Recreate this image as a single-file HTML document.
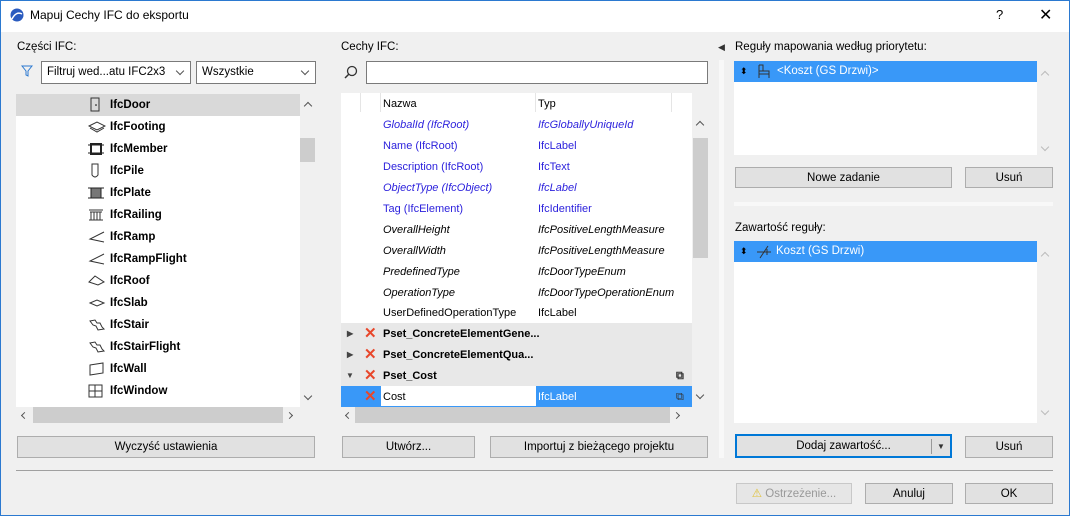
<!DOCTYPE html>
<html><head><meta charset="utf-8"><style>
*{box-sizing:border-box;margin:0;padding:0}
body{width:1070px;height:516px;overflow:hidden;background:#f0f0f0;font-family:"Liberation Sans",sans-serif;font-size:11px;color:#000;position:relative}
.a{position:absolute}
.win{position:absolute;left:0;top:0;width:1070px;height:516px;border:1px solid #2b79d0}
.title{left:1px;top:1px;width:1068px;height:31px;background:#fff}
.white{background:#fff}
.btn{position:absolute;background:#e1e1e1;border:1px solid #adadad;text-align:center;line-height:20px;font-size:11.5px}
.dd{position:absolute;background:#fff;border:1px solid #7a7a7a;height:23px;line-height:21px;padding-left:5px;font-size:11.5px}
.dd:after{content:"";position:absolute;right:7px;top:6px;width:5px;height:5px;border-right:1px solid #555;border-bottom:1px solid #555;transform:rotate(45deg)}
.row{position:absolute;height:22px;line-height:23px;font-weight:bold;font-size:11.5px}
.row svg{position:absolute;left:72px;top:3px}
.row span{position:absolute;left:94px}
.tr{position:absolute;left:341px;width:351px;height:21px;line-height:22px}
.tr .n{position:absolute;left:42px}
.tr .t{position:absolute;left:197px}
.b{color:#2a1fdc}
.i{font-style:italic}
.g{background:#e8e8e8;font-weight:bold}
.x{position:absolute;left:23px;top:0;color:#e8472b;font-weight:bold;font-size:15px}
.sb{position:absolute;background:#f0f0f0}
.up,.dn,.lf,.rt{position:absolute;width:6px;height:6px;border-left:1.5px solid #555;border-top:1.5px solid #555}
.up{transform:rotate(45deg)}
.dn{transform:rotate(225deg)}
.lf{transform:rotate(-45deg);width:5px;height:5px;border-width:1px}
.rt{transform:rotate(135deg);width:5px;height:5px;border-width:1px}
.lt{border-color:#bbb}
.sel{background:#3998f8;color:#fff}
</style></head><body>
<div class="win"></div>
<div class="a title"></div>
<svg class="a" style="left:10px;top:8px" width="14" height="14"><circle cx="7" cy="7" r="6.5" fill="#2a5bbf"/><path d="M2 11 Q6 3 12 6" stroke="#fff" stroke-width="1.5" fill="none"/></svg>
<div class="a" style="left:30px;top:8px;font-size:12px">Mapuj Cechy IFC do eksportu</div>
<div class="a" style="left:996px;top:7px;font-size:13px">?</div>
<div class="a" style="left:1039px;top:5px;font-size:16px">✕</div>

<!-- left -->
<div class="a" style="left:17px;top:41px;font-size:11.5px">Części IFC:</div>
<svg class="a" style="left:21px;top:65px" width="12" height="12"><path d="M1 1H11L7 6V11L5 10V6Z" fill="none" stroke="#2b79d0"/></svg>
<div class="dd" style="left:41px;top:61px;width:150px">Filtruj wed...atu IFC2x3</div>
<div class="dd" style="left:196px;top:61px;width:120px">Wszystkie</div>
<div class="a white" style="left:16px;top:94px;width:284px;height:313px"></div>
<div class="sb" style="left:300px;top:94px;width:16px;height:313px"></div>
<div class="a" style="left:300px;top:138px;width:15px;height:24px;background:#cdcdcd"></div>
<div class="up" style="left:305px;top:103px"></div>
<div class="dn" style="left:305px;top:393px"></div>
<div class="a" style="left:16px;top:94px;width:284px;height:22px;background:#d9d9d9"></div>
<div style="position:absolute;left:16px;top:94px">
<div class="row" style="top:0"><svg width="14" height="16"><rect x="3" y="1" width="8" height="13" fill="none" stroke="#333"/><circle cx="8" cy="8" r=".8"/></svg><span>IfcDoor</span></div>
<div class="row" style="top:22px"><svg width="18" height="16"><path d="M1 7L9 3L17 7L9 11Z M2 9L9 13L16 9" fill="none" stroke="#333"/></svg><span>IfcFooting</span></div>
<div class="row" style="top:44px"><svg width="16" height="16"><rect x="3" y="3" width="10" height="10" fill="none" stroke="#222" stroke-width="2"/><path d="M0 4H16M0 12H16" stroke="#222"/></svg><span>IfcMember</span></div>
<div class="row" style="top:66px"><svg width="14" height="16"><path d="M4 1V12Q7 16 10 12V1Z" fill="none" stroke="#333"/></svg><span>IfcPile</span></div>
<div class="row" style="top:88px"><svg width="16" height="16"><rect x="3" y="3" width="10" height="10" fill="#777" stroke="#222"/><path d="M0 3H16M0 13H16" stroke="#222"/></svg><span>IfcPlate</span></div>
<div class="row" style="top:110px"><svg width="16" height="16"><path d="M1 3H15M2 5H14M3 5V13M6 5V13M9 5V13M12 5V13M1 13H15" stroke="#333" fill="none"/></svg><span>IfcRailing</span></div>
<div class="row" style="top:132px"><svg width="18" height="16"><path d="M16 3L2 10L16 13" stroke="#333" fill="none"/></svg><span>IfcRamp</span></div>
<div class="row" style="top:154px"><svg width="18" height="16"><path d="M16 3L2 10L16 13" stroke="#333" fill="none"/></svg><span>IfcRampFlight</span></div>
<div class="row" style="top:176px"><svg width="18" height="16"><path d="M1 9L7 3L16 9L10 12Z" stroke="#333" fill="none"/></svg><span>IfcRoof</span></div>
<div class="row" style="top:198px"><svg width="18" height="16"><path d="M2 8L9 5L16 8L9 11Z" stroke="#333" fill="none"/></svg><span>IfcSlab</span></div>
<div class="row" style="top:220px"><svg width="18" height="16"><path d="M2 4L7 3L9 6L12 6L14 10L16 12L10 13L8 9L5 8Z" stroke="#333" fill="none"/></svg><span>IfcStair</span></div>
<div class="row" style="top:242px"><svg width="18" height="16"><path d="M2 4L7 3L9 6L12 6L14 10L16 12L10 13L8 9L5 8Z" stroke="#333" fill="none"/></svg><span>IfcStairFlight</span></div>
<div class="row" style="top:264px"><svg width="18" height="16"><path d="M2 4L15 2V12L2 14Z" stroke="#333" fill="none"/></svg><span>IfcWall</span></div>
<div class="row" style="top:286px"><svg width="16" height="16"><rect x="1" y="2" width="13" height="12" stroke="#333" fill="none"/><path d="M7 2V14M1 8H14" stroke="#333"/></svg><span>IfcWindow</span></div>
</div>
<div class="a" style="left:33px;top:407px;width:250px;height:16px;background:#cdcdcd"></div>
<div class="lf" style="left:22px;top:413px"></div>
<div class="rt" style="left:287px;top:413px"></div>
<div class="btn" style="left:17px;top:436px;width:298px;height:22px">Wyczyść ustawienia</div>

<!-- middle -->
<div class="a" style="left:341px;top:41px;font-size:11.5px">Cechy IFC:</div>
<svg class="a" style="left:344px;top:65px" width="14" height="14"><circle cx="8" cy="6" r="4.5" fill="none" stroke="#333" stroke-width="1.3"/><path d="M5 9L1 13" stroke="#333" stroke-width="1.5"/></svg>
<div class="a white" style="left:366px;top:61px;width:342px;height:23px;border:1px solid #7a7a7a"></div>
<div class="a white" style="left:341px;top:93px;width:351px;height:314px"></div>
<div class="a" style="left:360px;top:93px;width:1px;height:19px;background:#e5e5e5"></div>
<div class="a" style="left:380px;top:93px;width:1px;height:19px;background:#e5e5e5"></div>
<div class="a" style="left:535px;top:93px;width:1px;height:19px;background:#e5e5e5"></div>
<div class="a" style="left:671px;top:93px;width:1px;height:19px;background:#e5e5e5"></div>
<div class="tr" style="top:93px"><span class="n">Nazwa</span><span class="t">Typ</span></div>
<div class="tr b i" style="top:114px"><span class="n">GlobalId (IfcRoot)</span><span class="t">IfcGloballyUniqueId</span></div>
<div class="tr b" style="top:135px"><span class="n">Name (IfcRoot)</span><span class="t">IfcLabel</span></div>
<div class="tr b" style="top:156px"><span class="n">Description (IfcRoot)</span><span class="t">IfcText</span></div>
<div class="tr b i" style="top:177px"><span class="n">ObjectType (IfcObject)</span><span class="t">IfcLabel</span></div>
<div class="tr b" style="top:198px"><span class="n">Tag (IfcElement)</span><span class="t">IfcIdentifier</span></div>
<div class="tr i" style="top:219px"><span class="n">OverallHeight</span><span class="t">IfcPositiveLengthMeasure</span></div>
<div class="tr i" style="top:240px"><span class="n">OverallWidth</span><span class="t">IfcPositiveLengthMeasure</span></div>
<div class="tr i" style="top:261px"><span class="n">PredefinedType</span><span class="t">IfcDoorTypeEnum</span></div>
<div class="tr i" style="top:282px"><span class="n">OperationType</span><span class="t">IfcDoorTypeOperationEnum</span></div>
<div class="tr" style="top:302px"><span class="n">UserDefinedOperationType</span><span class="t">IfcLabel</span></div>
<div class="tr g" style="top:323px"><span class="a" style="left:6px;font-size:8px;color:#444">▶</span><span class="x">✕</span><span class="n">Pset_ConcreteElementGene...</span></div>
<div class="tr g" style="top:344px"><span class="a" style="left:6px;font-size:8px;color:#444">▶</span><span class="x">✕</span><span class="n">Pset_ConcreteElementQua...</span></div>
<div class="tr g" style="top:365px"><span class="a" style="left:5px;font-size:8px;color:#444">▼</span><span class="x">✕</span><span class="n">Pset_Cost</span><span class="a" style="left:335px;font-size:11px;color:#333">⧉</span></div>
<div class="tr sel" style="top:386px"><span class="x">✕</span><span class="a white" style="left:40px;top:0;width:155px;height:20px;color:#000;padding-left:2px">Cost</span><span class="t">IfcLabel</span><span class="a" style="left:335px;font-size:11px;color:#333">⧉</span></div>
<div class="sb" style="left:692px;top:93px;width:16px;height:314px"></div>
<div class="a" style="left:693px;top:138px;width:15px;height:120px;background:#cdcdcd"></div>
<div class="up" style="left:697px;top:122px"></div>
<div class="dn" style="left:697px;top:392px"></div>
<div class="a" style="left:355px;top:407px;width:315px;height:16px;background:#cdcdcd"></div>
<div class="lf" style="left:346px;top:413px"></div>
<div class="rt" style="left:674px;top:413px"></div>
<div class="btn" style="left:342px;top:436px;width:133px;height:22px">Utwórz...</div>
<div class="btn" style="left:490px;top:436px;width:218px;height:22px">Importuj z bieżącego projektu</div>

<!-- right -->
<div class="a" style="left:719px;top:60px;width:5px;height:398px;background:#f8f8f8"></div>
<div class="a" style="left:718px;top:42px;font-size:9px;color:#333">◀</div>
<div class="a" style="left:735px;top:41px;font-size:11.5px">Reguły mapowania według priorytetu:</div>
<div class="a white" style="left:734px;top:61px;width:303px;height:94px"></div>
<div class="a sel" style="left:734px;top:61px;width:303px;height:21px;line-height:21px;font-size:11.5px"><span class="a" style="left:6px;color:#000;font-size:9px">⬍</span>
<svg class="a" style="left:23px;top:3px" width="14" height="15"><path d="M2 1V14M2 7H12V14M2 1L6 1V7M2 10H12" stroke="#333" fill="none"/></svg><span class="a" style="left:43px">&lt;Koszt (GS Drzwi)&gt;</span></div>
<div class="up lt" style="left:1042px;top:72px"></div>
<div class="dn lt" style="left:1042px;top:144px"></div>
<div class="btn" style="left:735px;top:167px;width:217px;height:21px">Nowe zadanie</div>
<div class="btn" style="left:965px;top:167px;width:88px;height:21px">Usuń</div>
<div class="a" style="left:734px;top:202px;width:319px;height:4px;background:#f8f8f8"></div>
<div class="a" style="left:735px;top:222px;font-size:11.5px">Zawartość reguły:</div>
<div class="a white" style="left:734px;top:241px;width:303px;height:182px"></div>
<div class="a sel" style="left:734px;top:241px;width:303px;height:21px;line-height:21px;font-size:11.5px"><span class="a" style="left:6px;color:#000;font-size:9px">⬍</span>
<svg class="a" style="left:22px;top:4px" width="16" height="14"><path d="M1 7H15M4 13L12 1M11 4V10" stroke="#333" fill="none"/></svg><span class="a" style="left:42px">Koszt (GS Drzwi)</span></div>
<div class="up lt" style="left:1042px;top:253px"></div>
<div class="dn lt" style="left:1042px;top:408px"></div>
<div class="btn" style="left:735px;top:434px;width:217px;height:24px;border:2px solid #0078d7;line-height:20px">Dodaj zawartość...<span class="a" style="left:194px;top:3px;width:1px;height:15px;background:#999"></span><span class="a" style="left:200px;top:1px;font-size:8px;color:#333">▼</span></div>
<div class="btn" style="left:965px;top:436px;width:88px;height:22px">Usuń</div>

<div class="a" style="left:16px;top:470px;width:1037px;height:1px;background:#a0a0a0"></div>
<div class="btn" style="left:736px;top:483px;width:116px;height:21px;color:#999;border-color:#c8c8c8;background:#e6e6e6"><span style="color:#e0c030">⚠</span> Ostrzeżenie...</div>
<div class="btn" style="left:865px;top:483px;width:88px;height:21px">Anuluj</div>
<div class="btn" style="left:965px;top:483px;width:88px;height:21px">OK</div>
</body></html>
